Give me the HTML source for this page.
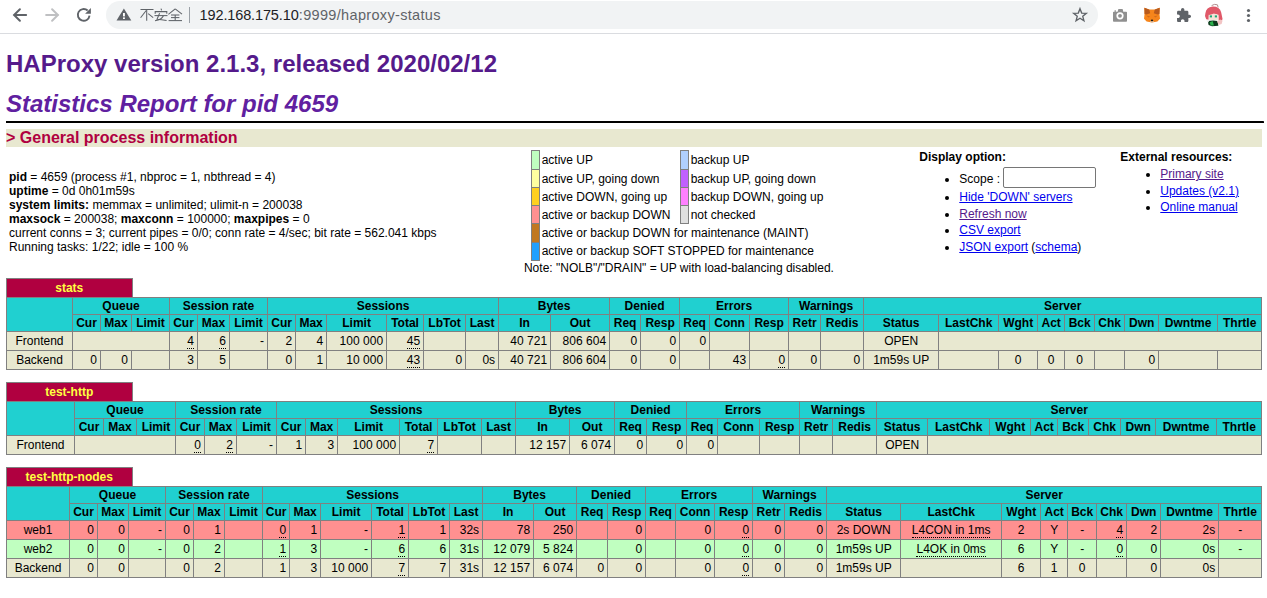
<!DOCTYPE html>
<html><head><meta charset="utf-8"><title>Statistics Report for HAProxy</title>
<style>
html,body{margin:0;padding:0}
body{font-family:"Liberation Sans",sans-serif;font-size:12px;color:black;background:white;width:1267px;height:598px;overflow:hidden;position:relative}
#chrome{position:absolute;left:0;top:0;width:1267px;height:33px;background:#fff;border-bottom:1px solid #dadce0}
#page{position:absolute;left:0;top:34px;width:1267px;bottom:0;overflow:hidden}
#content{margin:0 5px 0 6px}
th,td{font-size:12px}
h1{font-size:24px;margin:16px 0 12px 0;line-height:27.6px;font-weight:bold}
h1 a{color:#551a8b;text-decoration:none}
h2{font-size:24px;font-weight:bold;font-style:italic;color:#6020a0;margin:0;line-height:27.6px}
h3{font-size:16px;font-weight:bold;color:#b00040;background:#e8e8d0;margin:0;line-height:18px}
li{margin-top:3px;margin-right:24px;line-height:13.5px}
.hr{margin:4px 0 6px 0;border:1px inset black;border-bottom-style:solid;height:0;width:100%;overflow:hidden}
.titre{background:#20D0D0;color:#000;font-weight:bold;text-align:center}
.frontend{background:#e8e8d0}
.backend{background:#e8e8d0}
.active_down{background:#ff9090}
.active_going_up{background:#ffd020}
.active_going_down{background:#ffffa0}
.active_up{background:#c0ffc0}
.active_drain{background:#20a0FF}
.active_no_check{background:#e0e0e0}
.backup_going_up{background:#ff80ff}
.backup_going_down{background:#c060ff}
.backup_up{background:#b0d0ff}
.maintain{background:#c07820}
.rls{letter-spacing:0.2em;margin-right:1px}
a.px{color:#ffff40;text-decoration:none}
a.lfsb{color:#000;text-decoration:none}
table.tbl{border-collapse:collapse;border-style:none}
table.data{table-layout:fixed}
table.tbl td{text-align:right;border:1px solid gray;padding:2px 3px;white-space:nowrap}
table.tbl td.ac{text-align:center}
table.tbl th{border:1px solid gray}
table.tbl th.pxname{background:#b00040;color:#ffff40;font-weight:bold;border-style:solid solid none solid;padding:2px 3px;white-space:nowrap}
table.tbl th.empty{border-style:none;background:white}
table.lgd{border-collapse:collapse}
table.lgd td{border:1px solid gray;padding:2px}
table.lgd td.noborder{border-style:none;padding:2px;white-space:nowrap}
u{text-decoration:none;border-bottom:1px dotted black}
a{color:#0000ee}
a.v{color:#551a8b}
#info td{box-sizing:border-box;overflow:visible}
input.scope{box-sizing:border-box;width:93px;height:21px;margin-bottom:-1px !important;border:1px solid #767676;border-radius:2px;padding:1px 2px;margin:0;vertical-align:baseline;position:relative;top:-1px;background:#fff;font:13.33px "Liberation Sans",sans-serif}
</style></head>
<body>
<div id="chrome"><svg id="chromesvg" width="1267" height="34" viewBox="0 0 1267 34" style="position:absolute;left:0;top:0">
<rect x="0" y="0" width="1267" height="33" fill="#fff"/>
<rect x="0" y="33" width="1267" height="1" fill="#dadce0"/>
<!-- back -->
<g stroke="#5f6368" stroke-width="2" fill="none" stroke-linecap="round" stroke-linejoin="miter">
<path d="M14.6 15H26.1"/><path d="M19.9 9.2L14.1 15L19.9 20.8"/>
</g>
<!-- forward -->
<g stroke="#bfc0c2" stroke-width="2" fill="none" stroke-linecap="round" stroke-linejoin="miter">
<path d="M46.1 15H57.6"/><path d="M52.1 9.2L57.9 15L52.1 20.8"/>
</g>
<!-- reload -->
<g fill="none" stroke="#5f6368" stroke-width="1.9">
<path d="M89.54 15.72A5.90 5.90 0 1 1 87.65 10.52"/>
</g>
<path d="M85.1 13.7L90.9 7.9V13.7Z" fill="#5f6368"/>
<!-- omnibox -->
<rect x="106" y="1" width="992" height="28" rx="14" ry="14" fill="#f1f3f4"/>
<!-- warning -->
<path d="M123.9 8.6L131.3 20.6H116.5Z" fill="#5f6368"/>
<rect x="123" y="13" width="1.9" height="3.4" fill="#fff"/>
<rect x="123" y="17.4" width="1.9" height="1.6" fill="#fff"/>
<!-- 不安全 -->
<g stroke="#5f6368" stroke-width="1.05" fill="none">
<path d="M140.5 9.5H153.5"/><path d="M146.7 10V20.8"/><path d="M146.2 10.5L140.6 17.8"/><path d="M148.2 13.6L153.2 17.6"/>
<path d="M161 8.6L161.6 10.4"/><path d="M155.2 13.8V11.6H166.8V13.8"/><path d="M154.5 15.6H167.5"/><path d="M159.6 13.2L157 19.2Q161 19.6 166.6 20.6"/><path d="M163.4 15.8Q162 19.6 155 20.8"/>
<path d="M175.2 8.8L168.4 14.4"/><path d="M175.2 8.8L182 14.2"/><path d="M171 15H179.4"/><path d="M171 17.6H179.4"/><path d="M175.2 15V20.4"/><path d="M168.6 20.6H182"/>
</g>
<rect x="189" y="7" width="1" height="16" fill="#9aa0a6"/>
<!-- url -->
<text x="199.6" y="20.3" font-family="Liberation Sans" font-size="14.5" fill="#202124" letter-spacing="-0.13">192.168.175.10</text><text x="298.8" y="20.3" font-family="Liberation Sans" font-size="14.5" fill="#5f6368" letter-spacing="0.33">:9999/haproxy-status</text>
<!-- star -->
<path d="M1080.00 8.70L1081.70 13.05L1086.37 13.33L1082.76 16.30L1083.94 20.82L1080.00 18.30L1076.06 20.82L1077.24 16.30L1073.63 13.33L1078.30 13.05Z" fill="none" stroke="#5f6368" stroke-width="1.35" stroke-linejoin="miter"/>
<!-- camera -->
<path d="M1114.2 11.8H1117.6L1118.4 9H1122.6L1123.3 11.8H1126.2Q1127 11.8 1127 12.6V21Q1127 21.8 1126.2 21.8H1113.8Q1113 21.8 1113 21V12.6Q1113 11.8 1113.8 11.8Z" fill="#909090"/>
<rect x="1114.6" y="10.2" width="1.2" height="1.8" fill="#909090"/>
<circle cx="1120" cy="15.8" r="3.6" fill="#fff"/>
<circle cx="1120" cy="15.8" r="1.9" fill="#909090"/>
<!-- fox -->
<g>
<path d="M1144.4 7.8L1149 9.4H1155L1159.7 7.8L1159.5 14.6L1160 18.8L1157.4 21.6L1152 22.6L1146.6 21.6L1144 18.8L1144.5 14.6Z" fill="#f6851b"/>
<path d="M1144.4 7.8L1149.2 9.6L1150.2 13.2L1146.6 14.6L1144.6 14Z" fill="#b85a1c"/>
<path d="M1159.7 7.8L1154.8 9.6L1153.8 13.2L1157.4 14.6L1159.4 14Z" fill="#b85a1c"/>
<path d="M1146.2 15.6L1150.2 16.6L1148.6 17.4Z" fill="#d06a1c"/>
<path d="M1157.8 15.6L1153.8 16.6L1155.4 17.4Z" fill="#d06a1c"/>
<path d="M1149.6 21.2Q1152 23.6 1154.4 21.2Z" fill="#dccab8"/>
<ellipse cx="1152" cy="20.4" rx="1.2" ry="0.8" fill="#1a1a1a"/>
</g>
<!-- puzzle -->
<path transform="translate(1175.7 7.3) scale(0.667)" fill="#5f6368" d="M20.5 11H19V7c0-1.1-.9-2-2-2h-4V3.5C13 2.12 11.88 1 10.5 1S8 2.12 8 3.5V5H4c-1.1 0-1.99.9-1.99 2v3.8H3.5c1.49 0 2.7 1.21 2.7 2.7s-1.21 2.7-2.7 2.7H2V20c0 1.1.9 2 2 2h3.8v-1.5c0-1.49 1.21-2.7 2.7-2.7 1.49 0 2.7 1.21 2.7 2.7V22H17c1.1 0 2-.9 2-2v-4h1.5c1.38 0 2.5-1.12 2.5-2.5S21.88 11 20.5 11z"/>
<!-- avatar -->
<g>
<path d="M1211.6 5.6Q1214.4 3.6 1217.4 4.8L1218.2 7.4" stroke="#a88080" stroke-width="0.9" fill="none"/>
<path d="M1205.4 13.2Q1206.2 7.2 1212.6 6.6Q1219.6 6.4 1221.2 12.4L1222.6 19.2L1220.4 21.6L1218.6 20.2L1218.4 15.2L1208.8 15.2L1208.6 19.8L1206.2 19.2L1205 16Z" fill="#e05868"/>
<path d="M1208.8 14.4L1213.4 13L1218.4 14.4V19.6Q1213.6 21 1208.8 19.6Z" fill="#f6e2d8"/>
<path d="M1208.6 13.6L1212 11.8L1215 13L1218.6 12.2L1218.6 14.6L1214 13.6L1211 14.6L1208.6 15Z" fill="#e05868"/>
<rect x="1209.8" y="15.4" width="2.2" height="2" fill="#1aa878"/>
<rect x="1214.8" y="15.4" width="2.2" height="2" fill="#1aa878"/>
<path d="M1207.8 21L1213 20.4L1217.6 21L1218.4 25.8L1212 26.2L1208.6 25Z" fill="#0c3a1c"/>
<path d="M1209.6 22.4L1212.6 21L1214 25.6L1210.8 25.6Z" fill="#2cb04c"/>
<path d="M1217 21.2L1220.2 19.4L1222.6 20.6L1221.6 24L1218.6 25Z" fill="#f2c4c4"/>
<path d="M1206 20.6L1208.6 20L1209 22.6Z" fill="#f0f0f0"/>
</g>
<!-- menu -->
<g fill="#5f6368"><circle cx="1248.5" cy="10.5" r="1.6"/><circle cx="1248.5" cy="15.5" r="1.6"/><circle cx="1248.5" cy="20.5" r="1.6"/></g>
</svg>
</div>
<div id="page"><div id="content">
<h1><a href="#">HAProxy version 2.1.3, released 2020/02/12</a></h1>
<h2>Statistics Report for pid 4659</h2>
<hr class="hr">
<h3>&gt; General process information</h3>
<table border=0 id="info" style="table-layout:fixed;width:1256px"><tr><td align="left" nowrap style="width:431.6px">
<p><b>pid</b> = 4659 (process #1, nbproc = 1, nbthread = 4)<br>
<b>uptime</b> = 0d 0h01m59s<br>
<b>system limits:</b> memmax = unlimited; ulimit-n = 200038<br>
<b>maxsock</b> = 200038; <b>maxconn</b> = 100000; <b>maxpipes</b> = 0<br>
current conns = 3; current pipes = 0/0; conn rate = 4/sec; bit rate = 562.041 kbps<br>
Running tasks: 1/22; idle = 100 %<br>
</td><td align="center" nowrap style="width:474.7px">
<table class="lgd" style="table-layout:fixed;width:296px"><colgroup><col style="width:8px"><col style="width:141px"><col style="width:8px"><col style="width:139px"></colgroup><tr>
<td class="active_up">&nbsp;</td><td class="noborder">active UP </td><td class="backup_up">&nbsp;</td><td class="noborder">backup UP </td></tr><tr>
<td class="active_going_down"></td><td class="noborder">active UP, going down </td><td class="backup_going_down"></td><td class="noborder">backup UP, going down </td></tr><tr>
<td class="active_going_up"></td><td class="noborder">active DOWN, going up </td><td class="backup_going_up"></td><td class="noborder">backup DOWN, going up </td></tr><tr>
<td class="active_down"></td><td class="noborder">active or backup DOWN &nbsp;</td><td class="active_no_check"></td><td class="noborder">not checked </td></tr><tr>
<td class="maintain"></td><td class="noborder" colspan="3">active or backup DOWN for maintenance (MAINT) &nbsp;</td></tr><tr>
<td class="active_drain"></td><td class="noborder" colspan="3">active or backup SOFT STOPPED for maintenance &nbsp;</td></tr></table>
Note: "NOLB"/"DRAIN" = UP with load-balancing disabled.</td>
<td align="left" valign="top" nowrap style="width:199px"><b>Display option:</b><ul style="margin-top:4px">
<li>Scope : <input value="" type="text" class="scope"></li>
<li><a href="#">Hide 'DOWN' servers</a></li>
<li><a class="v" href="#">Refresh now</a></li>
<li><a href="#">CSV export</a></li>
<li><a href="#">JSON export</a> (<a href="#">schema</a>)</li>
</ul></td>
<td align="left" valign="top" nowrap style="width:140.7px"><b>External resources:</b><ul style="margin-top:4px">
<li><a class="v" href="#">Primary site</a><br></li>
<li><a href="#">Updates (v2.1)</a><br></li>
<li><a href="#">Online manual</a><br></li>
</ul></td>
</tr></table>

<table class="tbl" width="100%">
<tr class="titre"><th class="pxname" width="10%"><a class="px" href="#">stats</a></th><th class="empty" width="90%"></th></tr>
</table>
<table class="tbl data" style="width:1256px">
<colgroup><col style="width:66px"><col style="width:28px"><col style="width:31px"><col style="width:38px"><col style="width:28px"><col style="width:32px"><col style="width:38px"><col style="width:28px"><col style="width:31px"><col style="width:60px"><col style="width:37px"><col style="width:42px"><col style="width:33px"><col style="width:52px"><col style="width:59px"><col style="width:31px"><col style="width:39px"><col style="width:30px"><col style="width:40px"><col style="width:39px"><col style="width:32px"><col style="width:43px"><col style="width:75px"><col style="width:60px"><col style="width:39px"><col style="width:27px"><col style="width:30px"><col style="width:30px"><col style="width:34px"><col style="width:59px"><col style="width:44px"></colgroup>
<tr class="titre"><th rowspan=2></th><th colspan=3>Queue</th><th colspan=3>Session rate</th><th colspan=6>Sessions</th><th colspan=2>Bytes</th><th colspan=2>Denied</th><th colspan=3>Errors</th><th colspan=2>Warnings</th><th colspan=9>Server</th></tr>
<tr class="titre"><th>Cur</th><th>Max</th><th>Limit</th><th>Cur</th><th>Max</th><th>Limit</th><th>Cur</th><th>Max</th><th>Limit</th><th>Total</th><th>LbTot</th><th>Last</th><th>In</th><th>Out</th><th>Req</th><th>Resp</th><th>Req</th><th>Conn</th><th>Resp</th><th>Retr</th><th>Redis</th><th>Status</th><th>LastChk</th><th>Wght</th><th>Act</th><th>Bck</th><th>Chk</th><th>Dwn</th><th>Dwntme</th><th>Thrtle</th></tr>
<tr class="frontend"><td class=ac><a class=lfsb href="#">Frontend</a></td><td colspan=3></td><td><u>4</u></td><td><u>6</u></td><td>-</td><td>2</td><td>4</td><td>10<span class="rls">0</span>000</td><td><u>45</u></td><td></td><td></td><td>4<span class="rls">0</span>721</td><td>80<span class="rls">6</span>604</td><td>0</td><td>0</td><td>0</td><td></td><td></td><td></td><td></td><td class=ac>OPEN</td><td class=ac colspan=8></td></tr>
<tr class="backend"><td class=ac><a class=lfsb href="#">Backend</a></td><td>0</td><td>0</td><td></td><td>3</td><td>5</td><td></td><td>0</td><td>1</td><td>1<span class="rls">0</span>000</td><td><u>43</u></td><td>0</td><td>0s</td><td>4<span class="rls">0</span>721</td><td>80<span class="rls">6</span>604</td><td>0</td><td>0</td><td></td><td>43</td><td><u>0</u></td><td>0</td><td>0</td><td class=ac>1m59s UP</td><td class=ac>&nbsp;</td><td class=ac>0</td><td class=ac>0</td><td class=ac>0</td><td class=ac>&nbsp;</td><td>0</td><td class=ac>&nbsp;</td><td></td></tr>
</table><p>
<table class="tbl" width="100%">
<tr class="titre"><th class="pxname" width="10%"><a class="px" href="#">test-http</a></th><th class="empty" width="90%"></th></tr>
</table>
<table class="tbl data" style="width:1256px">
<colgroup><col style="width:68px"><col style="width:29px"><col style="width:33px"><col style="width:39px"><col style="width:29px"><col style="width:32px"><col style="width:40px"><col style="width:29px"><col style="width:32px"><col style="width:62px"><col style="width:38px"><col style="width:44px"><col style="width:34px"><col style="width:54px"><col style="width:45px"><col style="width:32px"><col style="width:40px"><col style="width:31px"><col style="width:42px"><col style="width:40px"><col style="width:33px"><col style="width:44px"><col style="width:51px"><col style="width:62px"><col style="width:41px"><col style="width:27px"><col style="width:31px"><col style="width:32px"><col style="width:35px"><col style="width:61px"><col style="width:45px"></colgroup>
<tr class="titre"><th rowspan=2></th><th colspan=3>Queue</th><th colspan=3>Session rate</th><th colspan=6>Sessions</th><th colspan=2>Bytes</th><th colspan=2>Denied</th><th colspan=3>Errors</th><th colspan=2>Warnings</th><th colspan=9>Server</th></tr>
<tr class="titre"><th>Cur</th><th>Max</th><th>Limit</th><th>Cur</th><th>Max</th><th>Limit</th><th>Cur</th><th>Max</th><th>Limit</th><th>Total</th><th>LbTot</th><th>Last</th><th>In</th><th>Out</th><th>Req</th><th>Resp</th><th>Req</th><th>Conn</th><th>Resp</th><th>Retr</th><th>Redis</th><th>Status</th><th>LastChk</th><th>Wght</th><th>Act</th><th>Bck</th><th>Chk</th><th>Dwn</th><th>Dwntme</th><th>Thrtle</th></tr>
<tr class="frontend"><td class=ac><a class=lfsb href="#">Frontend</a></td><td colspan=3></td><td><u>0</u></td><td><u>2</u></td><td>-</td><td>1</td><td>3</td><td>10<span class="rls">0</span>000</td><td><u>7</u></td><td></td><td></td><td>1<span class="rls">2</span>157</td><td><span class="rls">6</span>074</td><td>0</td><td>0</td><td>0</td><td></td><td></td><td></td><td></td><td class=ac>OPEN</td><td class=ac colspan=8></td></tr>
</table><p>
<table class="tbl" width="100%">
<tr class="titre"><th class="pxname" width="10%"><a class="px" href="#">test-http-nodes</a></th><th class="empty" width="90%"></th></tr>
</table>
<table class="tbl data" style="width:1256px">
<colgroup><col style="width:63px"><col style="width:28px"><col style="width:31px"><col style="width:37px"><col style="width:28px"><col style="width:31px"><col style="width:38px"><col style="width:27px"><col style="width:31px"><col style="width:51px"><col style="width:37px"><col style="width:41px"><col style="width:33px"><col style="width:51px"><col style="width:43px"><col style="width:31px"><col style="width:38px"><col style="width:30px"><col style="width:39px"><col style="width:38px"><col style="width:32px"><col style="width:42px"><col style="width:74px"><col style="width:101px"><col style="width:39px"><col style="width:27px"><col style="width:29px"><col style="width:30px"><col style="width:34px"><col style="width:58px"><col style="width:43px"></colgroup>
<tr class="titre"><th rowspan=2></th><th colspan=3>Queue</th><th colspan=3>Session rate</th><th colspan=6>Sessions</th><th colspan=2>Bytes</th><th colspan=2>Denied</th><th colspan=3>Errors</th><th colspan=2>Warnings</th><th colspan=9>Server</th></tr>
<tr class="titre"><th>Cur</th><th>Max</th><th>Limit</th><th>Cur</th><th>Max</th><th>Limit</th><th>Cur</th><th>Max</th><th>Limit</th><th>Total</th><th>LbTot</th><th>Last</th><th>In</th><th>Out</th><th>Req</th><th>Resp</th><th>Req</th><th>Conn</th><th>Resp</th><th>Retr</th><th>Redis</th><th>Status</th><th>LastChk</th><th>Wght</th><th>Act</th><th>Bck</th><th>Chk</th><th>Dwn</th><th>Dwntme</th><th>Thrtle</th></tr>
<tr class="active_down"><td class=ac><a class=lfsb href="#">web1</a></td><td>0</td><td>0</td><td>-</td><td>0</td><td>1</td><td></td><td><u>0</u></td><td>1</td><td>-</td><td><u>1</u></td><td>1</td><td>32s</td><td>78</td><td>250</td><td></td><td>0</td><td></td><td>0</td><td><u>0</u></td><td>0</td><td>0</td><td class=ac>2s DOWN</td><td class=ac><u>L4CON in 1ms</u></td><td class=ac>2</td><td class=ac>Y</td><td class=ac>-</td><td><u>4</u></td><td>2</td><td>2s</td><td class=ac>-</td></tr>
<tr class="active_up"><td class=ac><a class=lfsb href="#">web2</a></td><td>0</td><td>0</td><td>-</td><td>0</td><td>2</td><td></td><td><u>1</u></td><td>3</td><td>-</td><td><u>6</u></td><td>6</td><td>31s</td><td>1<span class="rls">2</span>079</td><td><span class="rls">5</span>824</td><td></td><td>0</td><td></td><td>0</td><td><u>0</u></td><td>0</td><td>0</td><td class=ac>1m59s UP</td><td class=ac><u>L4OK in 0ms</u></td><td class=ac>6</td><td class=ac>Y</td><td class=ac>-</td><td><u>0</u></td><td>0</td><td>0s</td><td class=ac>-</td></tr>
<tr class="backend"><td class=ac><a class=lfsb href="#">Backend</a></td><td>0</td><td>0</td><td></td><td>0</td><td>2</td><td></td><td>1</td><td>3</td><td>1<span class="rls">0</span>000</td><td><u>7</u></td><td>7</td><td>31s</td><td>1<span class="rls">2</span>157</td><td><span class="rls">6</span>074</td><td>0</td><td>0</td><td></td><td>0</td><td><u>0</u></td><td>0</td><td>0</td><td class=ac>1m59s UP</td><td class=ac>&nbsp;</td><td class=ac>6</td><td class=ac>1</td><td class=ac>0</td><td class=ac>&nbsp;</td><td>0</td><td>0s</td><td></td></tr>
</table><p>
</div></div>
</body></html>
